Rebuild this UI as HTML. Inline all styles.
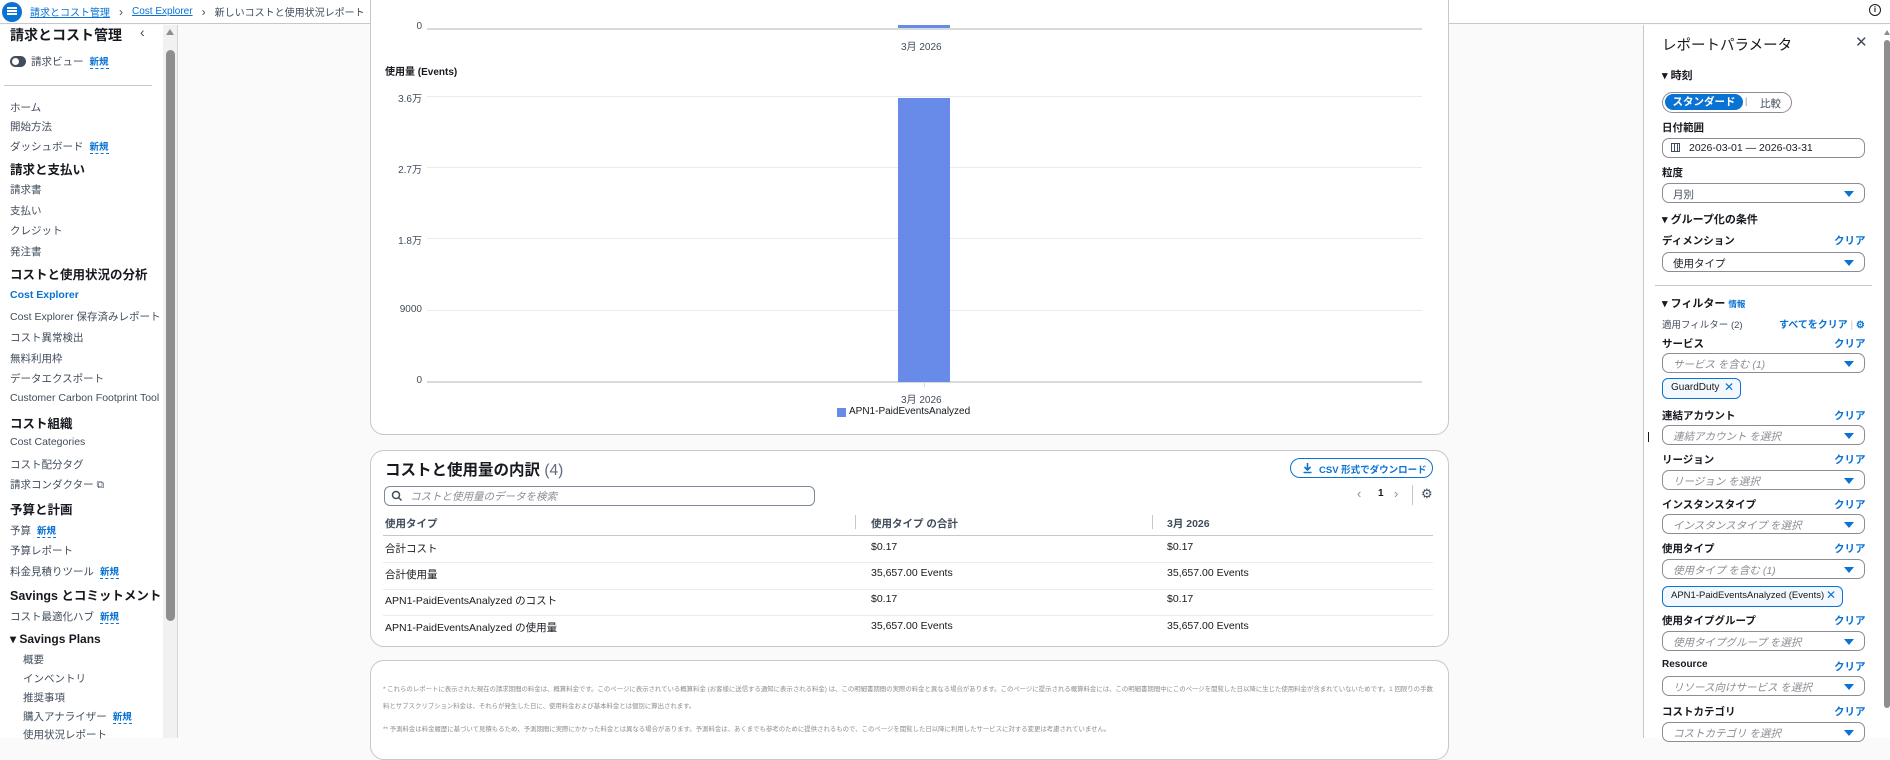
<!DOCTYPE html>
<html><head><meta charset="utf-8">
<style>
*{box-sizing:border-box;margin:0;padding:0}
body{width:1890px;height:738px;overflow:hidden;background:#fafafa;font-family:"Liberation Sans","Noto Sans CJK JP",sans-serif;color:#16191f;position:relative;font-size:11px}
.a{position:absolute;white-space:nowrap}
.top{position:absolute;left:0;top:0;width:1890px;height:24px;background:#fff;border-bottom:1px solid #c6c6cd}
.nav{position:absolute;left:0;top:25px;width:163px;height:713px;background:#fff}
.track{position:absolute;left:163px;top:25px;width:15px;height:713px;background:#f1f1f1;border-right:1px solid #d5d5d5}
.thumb{position:absolute;left:166px;top:50px;width:9px;height:571px;background:#8e8e8e;border-radius:5px}
.ni{position:absolute;left:10px;font-size:10.5px;color:#414d5c;white-space:nowrap}
.nh{position:absolute;left:10px;font-size:12.5px;font-weight:bold;color:#16191f;white-space:nowrap}
.new{color:#0972d3;font-size:9.5px;font-weight:bold;border-bottom:1px dashed #0972d3;margin-left:6px}
.card{position:absolute;left:370px;width:1079px;background:#fff;border:1px solid #c6c6cd;border-radius:14px}
.grid{position:absolute;left:427px;width:995px;height:1px;background:#e9ebed}
.yl{position:absolute;width:50px;left:372px;text-align:right;font-size:10px;color:#414d5c}
.th{position:absolute;font-size:10.5px;font-weight:bold;color:#414d5c}
.td{position:absolute;font-size:10.5px;color:#16191f}
.hl{position:absolute;left:383px;width:1050px;height:1px;background:#e9ebed}
.rp{position:absolute;left:1643px;top:25px;width:247px;height:713px;background:#fff;border-left:1px solid #c6c6cd}
.lab{position:absolute;left:1662px;font-size:10.5px;font-weight:bold;color:#16191f}
.clr{position:absolute;left:1834px;font-size:10.5px;font-weight:bold;color:#0972d3}
.sel{position:absolute;left:1662px;width:203px;height:20px;border:1px solid #8c8c94;border-radius:7px;background:#fff;font-size:10.5px;color:#414d5c;padding:3px 0 0 10px}
.sel.ph{font-style:italic;color:#8c8c94}
.sel:after{content:"";position:absolute;right:10px;top:7px;border-left:5px solid transparent;border-right:5px solid transparent;border-top:6px solid #0972d3}
.tok{position:absolute;left:1662px;height:21px;background:#f2f8fd;border:1px solid #0972d3;border-radius:6px;font-size:10px;color:#16191f;padding:3px 0 0 8px}
.tok i{position:absolute;right:6px;top:1px;color:#0972d3;font-size:12px;font-style:normal}
.foot{position:absolute;left:383px;font-size:6.4px;color:#8c8c94;white-space:nowrap}
.bc{position:absolute;left:30px;top:4px;display:flex;gap:9px;font-size:10px;color:#414d5c;align-items:center}
.bc a{color:#0972d3;text-decoration:underline}
</style></head><body>
<div class="top"></div>
<div class="a" style="left:2px;top:2px;width:20px;height:20px;border-radius:50%;background:#0972d3"></div>
<div class="a" style="left:7px;top:7px;width:10px;height:1.5px;background:#fff;box-shadow:0 3px 0 #fff,0 6px 0 #fff"></div>
<div class="bc"><a>請求とコスト管理</a><span style="font-size:12px">›</span><a>Cost Explorer</a><span style="font-size:12px">›</span><span>新しいコストと使用状況レポート</span></div>
<div class="a" style="left:1869px;top:4px;width:12px;height:12px;border:1.3px solid #16191f;border-radius:50%;font-size:8px;text-align:center;line-height:10px;font-weight:bold">i</div>

<div class="nav"></div>
<div class="track"></div>
<div class="thumb"></div>
<div class="a" style="left:166px;top:29px;border-left:4.5px solid transparent;border-right:4.5px solid transparent;border-bottom:6px solid #8e8e8e"></div>
<div class="nh" style="top:25px;font-size:14px">請求とコスト管理</div>
<div class="a" style="left:140px;top:24px;font-size:14px;color:#414d5c">‹</div>
<div class="a" style="left:10px;top:56px;width:16px;height:11px;border-radius:6px;background:#414d5c"></div>
<div class="a" style="left:12px;top:58px;width:7px;height:7px;border-radius:50%;background:#fff"></div>
<div class="ni" style="top:54px;left:31px">請求ビュー<span class="new">新規</span></div>
<div class="a" style="left:4px;top:85px;width:148px;height:1px;background:#c6c6cd"></div>
<div class="ni" style="top:100px">ホーム</div>
<div class="ni" style="top:119px">開始方法</div>
<div class="ni" style="top:139px">ダッシュボード<span class="new">新規</span></div>
<div class="nh" style="top:159px">請求と支払い</div>
<div class="ni" style="top:182px">請求書</div>
<div class="ni" style="top:203px">支払い</div>
<div class="ni" style="top:223px">クレジット</div>
<div class="ni" style="top:244px">発注書</div>
<div class="nh" style="top:264px">コストと使用状況の分析</div>
<div class="ni" style="top:289px;color:#0972d3;font-weight:bold">Cost Explorer</div>
<div class="ni" style="top:309px">Cost Explorer 保存済みレポート</div>
<div class="ni" style="top:330px">コスト異常検出</div>
<div class="ni" style="top:351px">無料利用枠</div>
<div class="ni" style="top:371px">データエクスポート</div>
<div class="ni" style="top:392px">Customer Carbon Footprint Tool</div>
<div class="nh" style="top:413px">コスト組織</div>
<div class="ni" style="top:436px">Cost Categories</div>
<div class="ni" style="top:457px">コスト配分タグ</div>
<div class="ni" style="top:477px">請求コンダクター ⧉</div>
<div class="nh" style="top:499px">予算と計画</div>
<div class="ni" style="top:523px">予算<span class="new">新規</span></div>
<div class="ni" style="top:543px">予算レポート</div>
<div class="ni" style="top:564px">料金見積りツール<span class="new">新規</span></div>
<div class="nh" style="top:585px">Savings とコミットメント</div>
<div class="ni" style="top:609px">コスト最適化ハブ<span class="new">新規</span></div>
<div class="nh" style="top:632px;font-size:12px">▾ Savings Plans</div>
<div class="ni" style="top:652px;left:23px">概要</div>
<div class="ni" style="top:671px;left:23px">インベントリ</div>
<div class="ni" style="top:690px;left:23px">推奨事項</div>
<div class="ni" style="top:709px;left:23px">購入アナライザー<span class="new">新規</span></div>
<div class="ni" style="top:727px;left:23px">使用状況レポート</div>

<!-- card1 -->
<div class="card" style="top:-20px;height:455px"></div>
<div class="a" style="left:898px;top:25px;width:52px;height:3px;background:#688ae8"></div>
<div class="grid" style="top:28px;height:2px;background:#d5dbdb"></div>
<div class="yl" style="top:21px">0</div>
<div class="a" style="left:901px;top:38px;font-size:10px;color:#414d5c">3月 2026</div>
<div class="a" style="left:385px;top:63px;font-size:10px;font-weight:bold">使用量 (Events)</div>
<div class="grid" style="top:96px"></div><div class="yl" style="top:90px">3.6万</div>
<div class="grid" style="top:167px"></div><div class="yl" style="top:161px">2.7万</div>
<div class="grid" style="top:238px"></div><div class="yl" style="top:232px">1.8万</div>
<div class="grid" style="top:310px"></div><div class="yl" style="top:304px">9000</div>
<div class="grid" style="top:381px;height:2px;background:#d5dbdb"></div><div class="yl" style="top:375px">0</div>
<div class="a" style="left:898px;top:98px;width:52px;height:284px;background:#688ae8"></div>
<div class="a" style="left:924px;top:383px;width:1px;height:4px;background:#d5dbdb"></div>
<div class="a" style="left:901px;top:391px;font-size:10px;color:#414d5c">3月 2026</div>
<div class="a" style="left:837px;top:408px;width:9px;height:9px;background:#688ae8"></div>
<div class="a" style="left:849px;top:406px;font-size:10px;color:#16191f">APN1-PaidEventsAnalyzed</div>

<!-- card2 -->
<div class="card" style="top:450px;height:197px"></div>
<div class="a" style="left:385px;top:458px;font-size:15.5px;font-weight:bold">コストと使用量の内訳 <span style="font-weight:normal;color:#5f6b7a">(4)</span></div>
<div class="a" style="left:384px;top:486px;width:431px;height:20px;border:1px solid #7d8998;border-radius:6px"></div>
<svg class="a" style="left:391px;top:490px" width="12" height="12" viewBox="0 0 12 12"><circle cx="5" cy="5" r="3.5" fill="none" stroke="#414d5c" stroke-width="1.5"/><path d="M7.5 7.5L10.5 10.5" stroke="#414d5c" stroke-width="1.5"/></svg>
<div class="a" style="left:410px;top:489px;font-size:10.5px;color:#8c8c94;font-style:italic">コストと使用量のデータを検索</div>
<div class="a" style="left:1290px;top:458px;width:143px;height:20px;border:1.5px solid #0972d3;border-radius:10px;font-size:9.5px;font-weight:bold;color:#0972d3;padding:3px 0 0 28px">CSV 形式でダウンロード</div>
<svg class="a" style="left:1302px;top:462px" width="11" height="12" viewBox="0 0 11 12"><path d="M5.5 1V8M2.5 5L5.5 8L8.5 5M1.5 10.5H9.5" fill="none" stroke="#0972d3" stroke-width="1.6"/></svg>
<div class="a" style="left:1357px;top:486px;font-size:13px;color:#8c8c94">‹</div>
<div class="a" style="left:1378px;top:488px;font-size:10px;font-weight:bold">1</div>
<div class="a" style="left:1394px;top:486px;font-size:13px;color:#8c8c94">›</div>
<div class="a" style="left:1412px;top:485px;width:1px;height:20px;background:#c6c6cd"></div>
<div class="a" style="left:1421px;top:486px;font-size:13px;color:#414d5c">⚙</div>
<div class="th" style="left:385px;top:516px">使用タイプ</div>
<div class="a" style="left:855px;top:515px;width:1px;height:14px;background:#c6c6cd"></div>
<div class="th" style="left:871px;top:516px">使用タイプ の合計</div>
<div class="a" style="left:1152px;top:515px;width:1px;height:14px;background:#c6c6cd"></div>
<div class="th" style="left:1167px;top:516px">3月 2026</div>
<div class="hl" style="top:535px;background:#c6c6cd"></div>
<div class="td" style="left:385px;top:541px">合計コスト</div><div class="td" style="left:871px;top:541px">$0.17</div><div class="td" style="left:1167px;top:541px">$0.17</div>
<div class="hl" style="top:562px"></div>
<div class="td" style="left:385px;top:567px">合計使用量</div><div class="td" style="left:871px;top:567px">35,657.00 Events</div><div class="td" style="left:1167px;top:567px">35,657.00 Events</div>
<div class="hl" style="top:589px"></div>
<div class="td" style="left:385px;top:593px">APN1-PaidEventsAnalyzed のコスト</div><div class="td" style="left:871px;top:593px">$0.17</div><div class="td" style="left:1167px;top:593px">$0.17</div>
<div class="hl" style="top:615px"></div>
<div class="td" style="left:385px;top:620px">APN1-PaidEventsAnalyzed の使用量</div><div class="td" style="left:871px;top:620px">35,657.00 Events</div><div class="td" style="left:1167px;top:620px">35,657.00 Events</div>

<!-- card3 -->
<div class="card" style="top:660px;height:100px"></div>
<div class="foot" style="top:684px">* これらのレポートに表示された現在の請求期間の料金は、概算料金です。このページに表示されている概算料金 (お客様に送信する通知に表示される料金) は、この明細書期間の実際の料金と異なる場合があります。このページに提示される概算料金には、この明細書期間中にこのページを閲覧した日以降に生じた使用料金が含まれていないためです。1 回限りの手数</div>
<div class="foot" style="top:701px">料とサブスクリプション料金は、それらが発生した日に、使用料金および基本料金とは個別に算出されます。</div>
<div class="foot" style="top:724px">** 予測料金は料金履歴に基づいて見積もるため、予測期間に実際にかかった料金とは異なる場合があります。予測料金は、あくまでも参考のために提供されるもので、このページを閲覧した日以降に利用したサービスに対する変更は考慮されていません。</div>

<!-- right panel -->
<div class="rp"></div>
<div class="a" style="left:1884px;top:30px;border-left:3px solid transparent;border-right:3px solid transparent;border-bottom:5px solid #8e8e8e"></div>
<div class="a" style="left:1884px;top:40px;width:6px;height:668px;background:#8e8e8e;border-radius:3px"></div>
<div class="a" style="left:1662px;top:34px;font-size:14.5px;color:#16191f">レポートパラメータ</div>
<div class="a" style="left:1855px;top:33px;font-size:15px;color:#414d5c">✕</div>
<div class="lab" style="top:67px;font-size:11px">▾ 時刻</div>
<div class="a" style="left:1662px;top:92px;width:130px;height:21px;border:1px solid #8c8c94;border-radius:11px"></div>
<div class="a" style="left:1665px;top:94px;width:78px;height:16px;background:#0972d3;border-radius:9px;color:#fff;font-size:10.5px;font-weight:bold;text-align:center;line-height:16px">スタンダード</div>
<div class="a" style="left:1745px;top:96px;font-size:9px;color:#8c8c94">|</div>
<div class="a" style="left:1760px;top:96px;font-size:10.5px;color:#414d5c">比較</div>
<div class="lab" style="top:120px">日付範囲</div>
<div class="a" style="left:1662px;top:138px;width:203px;height:20px;border:1px solid #8c8c94;border-radius:7px;font-size:10.5px;padding:3px 0 0 26px">2026-03-01 — 2026-03-31</div>
<div class="a" style="left:1671px;top:143px;width:9px;height:9px;border:1px solid #414d5c;background:repeating-linear-gradient(90deg,transparent 0 2px,#414d5c 2px 3px)"></div>
<div class="lab" style="top:165px">粒度</div>
<div class="sel" style="top:183px">月別</div>
<div class="lab" style="top:211px;font-size:11px">▾ グループ化の条件</div>
<div class="lab" style="top:233px">ディメンション</div><div class="clr" style="top:233px">クリア</div>
<div class="sel" style="top:252px;color:#16191f">使用タイプ</div>
<div class="a" style="left:1655px;top:285px;width:217px;height:1px;background:#c6c6cd"></div>
<div class="lab" style="top:295px;font-size:11px">▾ フィルター <span style="color:#0972d3;font-size:8.5px">情報</span></div>
<div class="a" style="left:1662px;top:317px;font-size:9.5px;color:#414d5c">適用フィルター (2)</div>
<div class="a" style="left:1779px;top:316px;font-size:10px;font-weight:bold;color:#0972d3">すべてをクリア<span style="color:#c6c6cd;font-weight:normal"> | </span>⚙</div>
<div class="lab" style="top:336px">サービス</div><div class="clr" style="top:336px">クリア</div>
<div class="sel ph" style="top:353px">サービス を含む (1)</div>
<div class="tok" style="top:378px;width:79px">GuardDuty<i>✕</i></div>
<div class="lab" style="top:408px">連結アカウント</div><div class="clr" style="top:408px">クリア</div>
<div class="sel ph" style="top:425px">連結アカウント を選択</div>
<div class="a" style="left:1648px;top:432px;width:1px;height:10px;background:#16191f"></div>
<div class="lab" style="top:452px">リージョン</div><div class="clr" style="top:452px">クリア</div>
<div class="sel ph" style="top:470px">リージョン を選択</div>
<div class="lab" style="top:497px">インスタンスタイプ</div><div class="clr" style="top:497px">クリア</div>
<div class="sel ph" style="top:514px">インスタンスタイプ を選択</div>
<div class="lab" style="top:541px">使用タイプ</div><div class="clr" style="top:541px">クリア</div>
<div class="sel ph" style="top:559px">使用タイプ を含む (1)</div>
<div class="tok" style="top:586px;width:181px;font-size:9.5px">APN1-PaidEventsAnalyzed (Events)<i>✕</i></div>
<div class="lab" style="top:613px">使用タイプグループ</div><div class="clr" style="top:613px">クリア</div>
<div class="sel ph" style="top:631px">使用タイプグループ を選択</div>
<div class="lab" style="top:659px;font-size:10px">Resource</div><div class="clr" style="top:659px">クリア</div>
<div class="sel ph" style="top:676px">リソース向けサービス を選択</div>
<div class="lab" style="top:704px">コストカテゴリ</div><div class="clr" style="top:704px">クリア</div>
<div class="sel ph" style="top:722px">コストカテゴリ を選択</div>
</body></html>
